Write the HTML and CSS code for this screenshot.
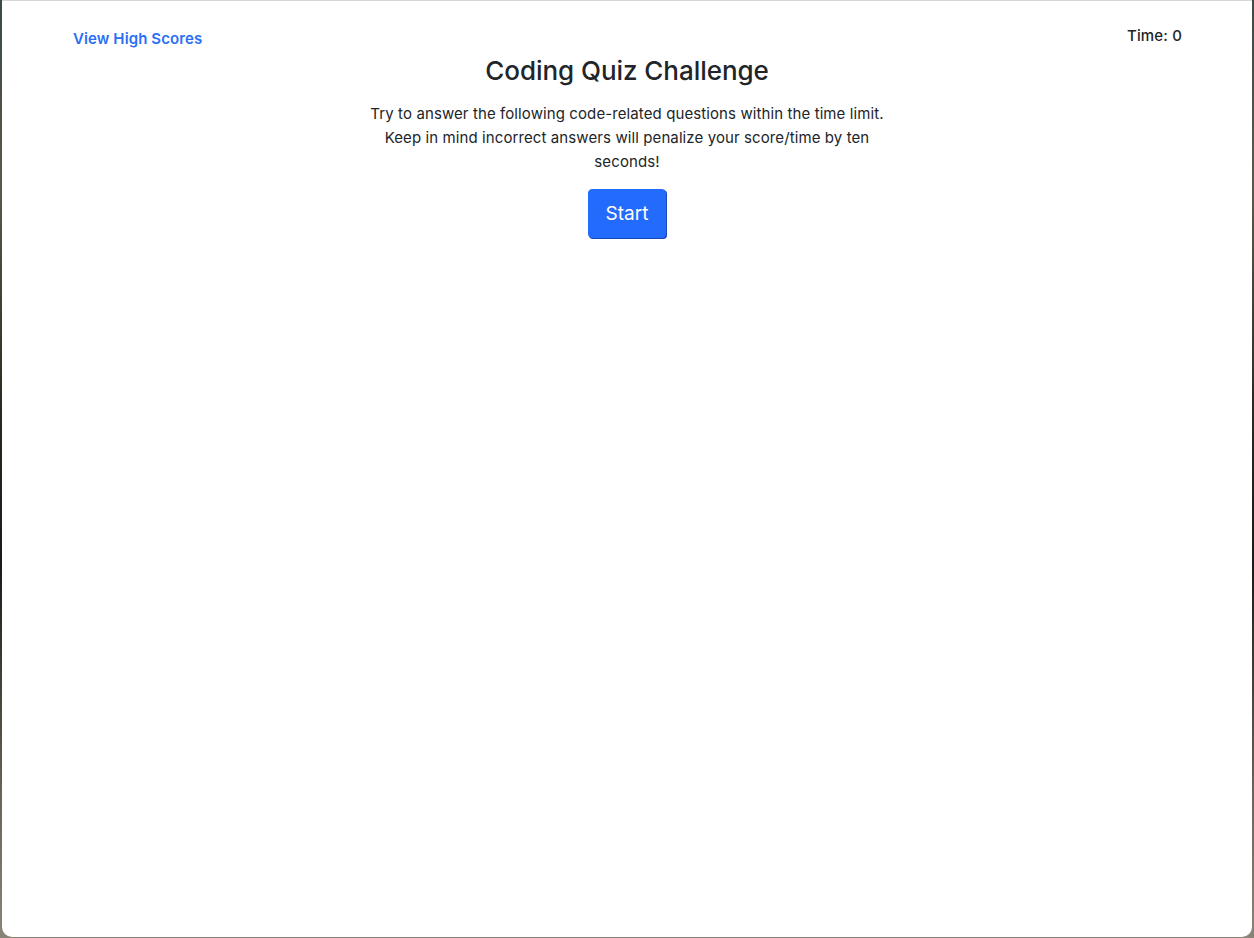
FILE: index.html
```html
<!DOCTYPE html>
<html lang="en">
<head>
<meta charset="utf-8">
<title>Coding Quiz Challenge</title>
<link rel="stylesheet" href="styles.css">
</head>
<body>
<div class="window">
  <header class="topbar">
    <a class="scores-link" href="#">View High Scores</a>
    <div class="timer">Time: <span>0</span></div>
  </header>
  <main class="intro">
    <h1 class="title">Coding Quiz Challenge</h1>
    <p class="desc">Try to answer the following code-related questions within the time limit. Keep in mind incorrect answers will penalize your score/time by ten seconds!</p>
    <button class="start-btn" type="button">Start</button>
  </main>
</div>
</body>
</html>
```

FILE: styles.css
```css
html, body {
  margin: 0;
  padding: 0;
  height: 100%;
}
body {
  background: linear-gradient(180deg, #3a4a44 0%, #5a5a4a 20%, #2a2620 45%, #1c1a16 60%, #6b645a 85%, #8a8478 100%);
  font-family: Inter, "Noto Sans", "Liberation Sans", sans-serif;
  color: #212529;
  overflow: hidden;
}
.window {
  margin-left: 2px;
  width: 1250px;
  height: 937px;
  background: #ffffff;
  border-top: 1px solid #d6d6d8;
  border-radius: 0 0 10px 10px;
  box-sizing: border-box;
}
.topbar {
  display: flex;
  justify-content: space-between;
  align-items: flex-start;
  padding: 25px 70px 0 71px;
  height: 25px;
}
.scores-link {
  color: #2a6ff6;
  text-decoration: none;
  font-weight: 600;
  font-size: 15px;
  line-height: 24px;
  margin-top: 1px;
  letter-spacing: 0.1px;
}
.timer {
  font-size: 15px;
  font-weight: 500;
  line-height: 20px;
  letter-spacing: 0.15px;
}
.intro {
  display: flex;
  flex-direction: column;
  align-items: center;
  text-align: center;
}
.title {
  margin: 2px 0 0;
  font-size: 26px;
  font-weight: 500;
  line-height: 36px;
  letter-spacing: -0.05px;
}
.desc {
  margin: 13px 0 0;
  width: 530px;
  font-size: 15px;
  line-height: 24px;
  letter-spacing: 0.1px;
}
.start-btn {
  margin-top: 15px;
  width: 78px;
  height: 49px;
  background: #236bfd;
  color: #ffffff;
  border: 1px solid #236bfd;
  border-radius: 4px;
  box-shadow: 1px 1px 0 #1848b8;
  font-family: inherit;
  font-size: 19px;
  font-weight: 400;
  letter-spacing: 0;
  padding: 0;
  cursor: pointer;
}
```
